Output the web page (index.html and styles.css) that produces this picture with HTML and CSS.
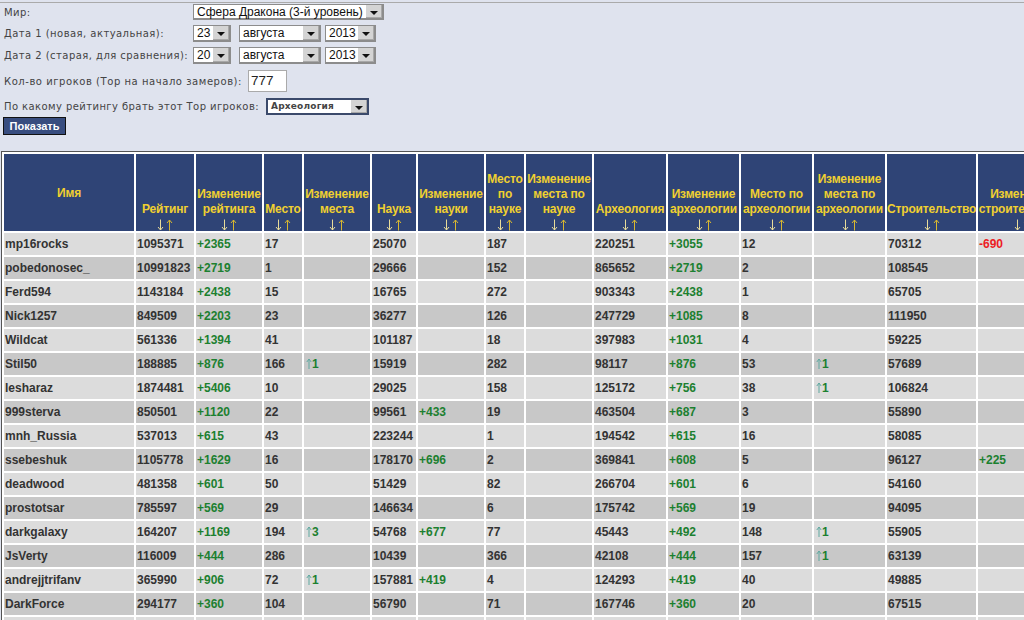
FILE: index.html
```html
<!DOCTYPE html>
<html lang="ru">
<head>
<meta charset="utf-8">
<title>Рейтинг</title>
<link rel="stylesheet" href="styles.css">
</head>
<body>
<svg class="defs" width="0" height="0" aria-hidden="true">
  <symbol id="sort" viewBox="0 0 18 12">
    <path class="dn" d="M4.5 0.5V11M2 8l2.5 3L7 8"/>
    <path class="un" d="M13.5 11.5V1M11 4l2.5-3L16 4"/>
  </symbol>
  <symbol id="rise" viewBox="0 0 6 11">
    <path class="ri" d="M3 11V1M.8 4L3 1l2.2 3"/>
  </symbol>
</svg>
<form class="filters">
  <div class="row row-world"><label class="lbl lbl-w">Мир:</label><span class="sel sel-world"><span class="val">Сфера Дракона (3-й уровень)</span><span class="arr"><i></i></span></span></div>
  <div class="row row-date"><label class="lbl lbl-w">Дата 1 (новая, актуальная):</label><span class="sel sel-d"><span class="val">23</span><span class="arr"><i></i></span></span><span class="sel sel-m"><span class="val">августа</span><span class="arr"><i></i></span></span><span class="sel sel-y"><span class="val">2013</span><span class="arr"><i></i></span></span></div>
  <div class="row row-date"><label class="lbl lbl-w">Дата 2 (старая, для сравнения):</label><span class="sel sel-d"><span class="val">20</span><span class="arr"><i></i></span></span><span class="sel sel-m"><span class="val">августа</span><span class="arr"><i></i></span></span><span class="sel sel-y"><span class="val">2013</span><span class="arr"><i></i></span></span></div>
  <div class="row row-count"><label class="lbl lbl-c">Кол-во игроков (Тор на начало замеров):</label><span class="num">777</span></div>
  <div class="row row-by"><label class="lbl lbl-b">По какому рейтингу брать этот Тор игроков:</label><span class="sel sel-by"><span class="val">Археология</span><span class="arr"><i></i></span></span></div>
  <button type="button" class="show">Показать</button>
</form>
<table class="rating">
  <colgroup><col class="c1"><col class="c2"><col class="c3"><col class="c4"><col class="c5"><col class="c6"><col class="c7"><col class="c8"><col class="c9"><col class="c10"><col class="c11"><col class="c12"><col class="c13"><col class="c14"><col class="c15"></colgroup>
  <thead>
    <tr>
      <th class="mid">Имя</th>
      <th>Рейтинг<svg class="so"><use href="#sort"/></svg></th>
      <th>Изменение рейтинга<svg class="so"><use href="#sort"/></svg></th>
      <th>Место<svg class="so"><use href="#sort"/></svg></th>
      <th>Изменение места<svg class="so"><use href="#sort"/></svg></th>
      <th>Наука<svg class="so"><use href="#sort"/></svg></th>
      <th>Изменение науки<svg class="so"><use href="#sort"/></svg></th>
      <th>Место по науке<svg class="so"><use href="#sort"/></svg></th>
      <th>Изменение места по науке<svg class="so"><use href="#sort"/></svg></th>
      <th>Археология<svg class="so"><use href="#sort"/></svg></th>
      <th>Изменение археологии<svg class="so"><use href="#sort"/></svg></th>
      <th>Место по археологии<svg class="so"><use href="#sort"/></svg></th>
      <th>Изменение места по археологии<svg class="so"><use href="#sort"/></svg></th>
      <th>Строительство<svg class="so"><use href="#sort"/></svg></th>
      <th>Изменение строительства<svg class="so"><use href="#sort"/></svg></th>
    </tr>
  </thead>
  <tbody>
    <tr><td>mp16rocks</td><td>1095371</td><td class="g">+2365</td><td>17</td><td></td><td>25070</td><td></td><td>187</td><td></td><td>220251</td><td class="g">+3055</td><td>12</td><td></td><td>70312</td><td class="r">-690</td></tr>
    <tr><td>pobedonosec_</td><td>10991823</td><td class="g">+2719</td><td>1</td><td></td><td>29666</td><td></td><td>152</td><td></td><td>865652</td><td class="g">+2719</td><td>2</td><td></td><td>108545</td><td></td></tr>
    <tr><td>Ferd594</td><td>1143184</td><td class="g">+2438</td><td>15</td><td></td><td>16765</td><td></td><td>272</td><td></td><td>903343</td><td class="g">+2438</td><td>1</td><td></td><td>65705</td><td></td></tr>
    <tr><td>Nick1257</td><td>849509</td><td class="g">+2203</td><td>23</td><td></td><td>36277</td><td></td><td>126</td><td></td><td>247729</td><td class="g">+1085</td><td>8</td><td></td><td>111950</td><td></td></tr>
    <tr><td>Wildcat</td><td>561336</td><td class="g">+1394</td><td>41</td><td></td><td>101187</td><td></td><td>18</td><td></td><td>397983</td><td class="g">+1031</td><td>4</td><td></td><td>59225</td><td></td></tr>
    <tr><td>Stil50</td><td>188885</td><td class="g">+876</td><td>166</td><td class="g"><svg class="up"><use href="#rise"/></svg>1</td><td>15919</td><td></td><td>282</td><td></td><td>98117</td><td class="g">+876</td><td>53</td><td class="g"><svg class="up"><use href="#rise"/></svg>1</td><td>57689</td><td></td></tr>
    <tr><td>lesharaz</td><td>1874481</td><td class="g">+5406</td><td>10</td><td></td><td>29025</td><td></td><td>158</td><td></td><td>125172</td><td class="g">+756</td><td>38</td><td class="g"><svg class="up"><use href="#rise"/></svg>1</td><td>106824</td><td></td></tr>
    <tr><td>999sterva</td><td>850501</td><td class="g">+1120</td><td>22</td><td></td><td>99561</td><td class="g">+433</td><td>19</td><td></td><td>463504</td><td class="g">+687</td><td>3</td><td></td><td>55890</td><td></td></tr>
    <tr><td>mnh_Russia</td><td>537013</td><td class="g">+615</td><td>43</td><td></td><td>223244</td><td></td><td>1</td><td></td><td>194542</td><td class="g">+615</td><td>16</td><td></td><td>58085</td><td></td></tr>
    <tr><td>ssebeshuk</td><td>1105778</td><td class="g">+1629</td><td>16</td><td></td><td>178170</td><td class="g">+696</td><td>2</td><td></td><td>369841</td><td class="g">+608</td><td>5</td><td></td><td>96127</td><td class="g">+225</td></tr>
    <tr><td>deadwood</td><td>481358</td><td class="g">+601</td><td>50</td><td></td><td>51429</td><td></td><td>82</td><td></td><td>266704</td><td class="g">+601</td><td>6</td><td></td><td>54160</td><td></td></tr>
    <tr><td>prostotsar</td><td>785597</td><td class="g">+569</td><td>29</td><td></td><td>146634</td><td></td><td>6</td><td></td><td>175742</td><td class="g">+569</td><td>19</td><td></td><td>94095</td><td></td></tr>
    <tr><td>darkgalaxy</td><td>164207</td><td class="g">+1169</td><td>194</td><td class="g"><svg class="up"><use href="#rise"/></svg>3</td><td>54768</td><td class="g">+677</td><td>77</td><td></td><td>45443</td><td class="g">+492</td><td>148</td><td class="g"><svg class="up"><use href="#rise"/></svg>1</td><td>55905</td><td></td></tr>
    <tr><td>JsVerty</td><td>116009</td><td class="g">+444</td><td>286</td><td></td><td>10439</td><td></td><td>366</td><td></td><td>42108</td><td class="g">+444</td><td>157</td><td class="g"><svg class="up"><use href="#rise"/></svg>1</td><td>63139</td><td></td></tr>
    <tr><td>andrejjtrifanv</td><td>365990</td><td class="g">+906</td><td>72</td><td class="g"><svg class="up"><use href="#rise"/></svg>1</td><td>157881</td><td class="g">+419</td><td>4</td><td></td><td>124293</td><td class="g">+419</td><td>40</td><td></td><td>49885</td><td></td></tr>
    <tr><td>DarkForce</td><td>294177</td><td class="g">+360</td><td>104</td><td></td><td>56790</td><td></td><td>71</td><td></td><td>167746</td><td class="g">+360</td><td>20</td><td></td><td>67515</td><td></td></tr>
    <tr><td>&nbsp;</td><td></td><td></td><td></td><td></td><td></td><td></td><td></td><td></td><td></td><td></td><td></td><td></td><td></td><td></td></tr>
  </tbody>
</table>
</body>
</html>
```
FILE: styles.css
```css
html, body { margin: 0; padding: 0; height: 620px; overflow: hidden; background: #dfe3ee; }
body { width: 1024px; font-family: "Liberation Sans", Arial, sans-serif; }
.defs { display: block; height: 0; }

.filters {
  display: flex; flex-direction: column; align-items: flex-start;
  height: 149px; box-sizing: border-box;
  border-top: 1px solid #aaa; margin-top: 2px; padding: 0 0 0 4px;
}
.row { display: flex; align-items: center; }
.row-world { height: 16px; margin-top: 1px; }
.row-date { height: 17px; margin-top: 5px; }
.row-count { height: 22px; margin-top: 6px; }
.row-by { height: 17px; margin-top: 6px; }
.lbl { font: 10px "DejaVu Sans", Verdana, sans-serif; color: #444; letter-spacing: .45px; white-space: nowrap; }
.lbl-w { width: 189px; }
.lbl-c { width: 244px; letter-spacing: .55px; }
.lbl-b { width: 262px; letter-spacing: .42px; }
.sel { display: flex; align-items: stretch; height: 100%; box-sizing: border-box; border: solid #8c8c8c; border-width: 1px 2px 2px 1px; background: #fff; font: 12px "Liberation Sans", Arial, sans-serif; color: #111; }
.val { flex: 1; padding: 0 0 0 3px; line-height: 14px; white-space: nowrap; }
.arr { width: 15px; margin-left: 2px; background: #d4d4d4; border-right: 1px solid #a8a8a8; border-bottom: 1px solid #a8a8a8; display: flex; align-items: center; justify-content: center; }
.arr i { width: 0; height: 0; border: solid transparent; border-width: 4px 4px 0; border-top-color: #111; margin-top: 3px; }
.sel-world { width: 191px; }
.sel-d { width: 38px; margin-right: 8px; }
.sel-m { width: 82px; margin-right: 4px; }
.sel-y { width: 51px; }
.sel-by { width: 103px; border: 2px solid #3b4a6b; font: bold 9px/13px "DejaVu Sans", Verdana, sans-serif; letter-spacing: .2px; color: #444; }
.sel-by .val { line-height: 13px; }
.num { width: 39px; height: 22px; box-sizing: border-box; background: #fff; border: 1px solid #aaa; font: 13.5px/20px "Liberation Sans", Arial, sans-serif; color: #222; padding-left: 2px; }
.show { display: block; width: 63px; height: 18px; margin: 2px 0 0 -1px; padding: 0; background: #384d7f; border: 1px solid #111; color: #fff; font: bold 11px "Liberation Sans", Arial, sans-serif; cursor: pointer; }

.rating {
  table-layout: fixed; width: 1068px; border-collapse: separate; border-spacing: 2px;
  border: 1px solid #555; margin-left: 1px; background: #fff;
  font: bold 12px "Liberation Sans", Arial, sans-serif; color: #333;
}
.c1 { width: 130px; } .c2 { width: 58px; } .c3 { width: 66px; } .c4 { width: 38px; } .c5 { width: 66px; }
.c6 { width: 44px; } .c7 { width: 66px; } .c8 { width: 38px; } .c9 { width: 66px; } .c10 { width: 72px; }
.c11 { width: 71px; } .c12 { width: 71px; } .c13 { width: 71px; } .c14 { width: 89px; } .c15 { width: 88px; }
th { height: 77px; box-sizing: border-box; padding: 0; background: #2f4476; color: #f0d030; vertical-align: bottom; text-align: center; line-height: 15px; font-weight: bold; letter-spacing: -.15px; }
th.mid { vertical-align: middle; padding-top: 1px; }
.so { display: block; width: 18px; height: 12px; margin: 2px auto 0; fill: none; stroke-width: 1; }
.dn { stroke: #e8dc9a; fill: none; }
.un { stroke: #d9b830; fill: none; }
td { height: 22px; box-sizing: border-box; padding: 0 0 0 1px; white-space: nowrap; overflow: hidden; }
tbody tr:nth-child(odd) td { background: #dcdcdc; }
tbody tr:nth-child(even) td { background: #c8c8c8; }
td.g { color: #1c8030; }
td.r { color: #ec1c24; }
.up { display: inline-block; width: 6px; height: 11px; margin: 0 0 0 1px; vertical-align: -1px; }
.ri { stroke: #5fa8a0; fill: none; stroke-width: 1; }
```
